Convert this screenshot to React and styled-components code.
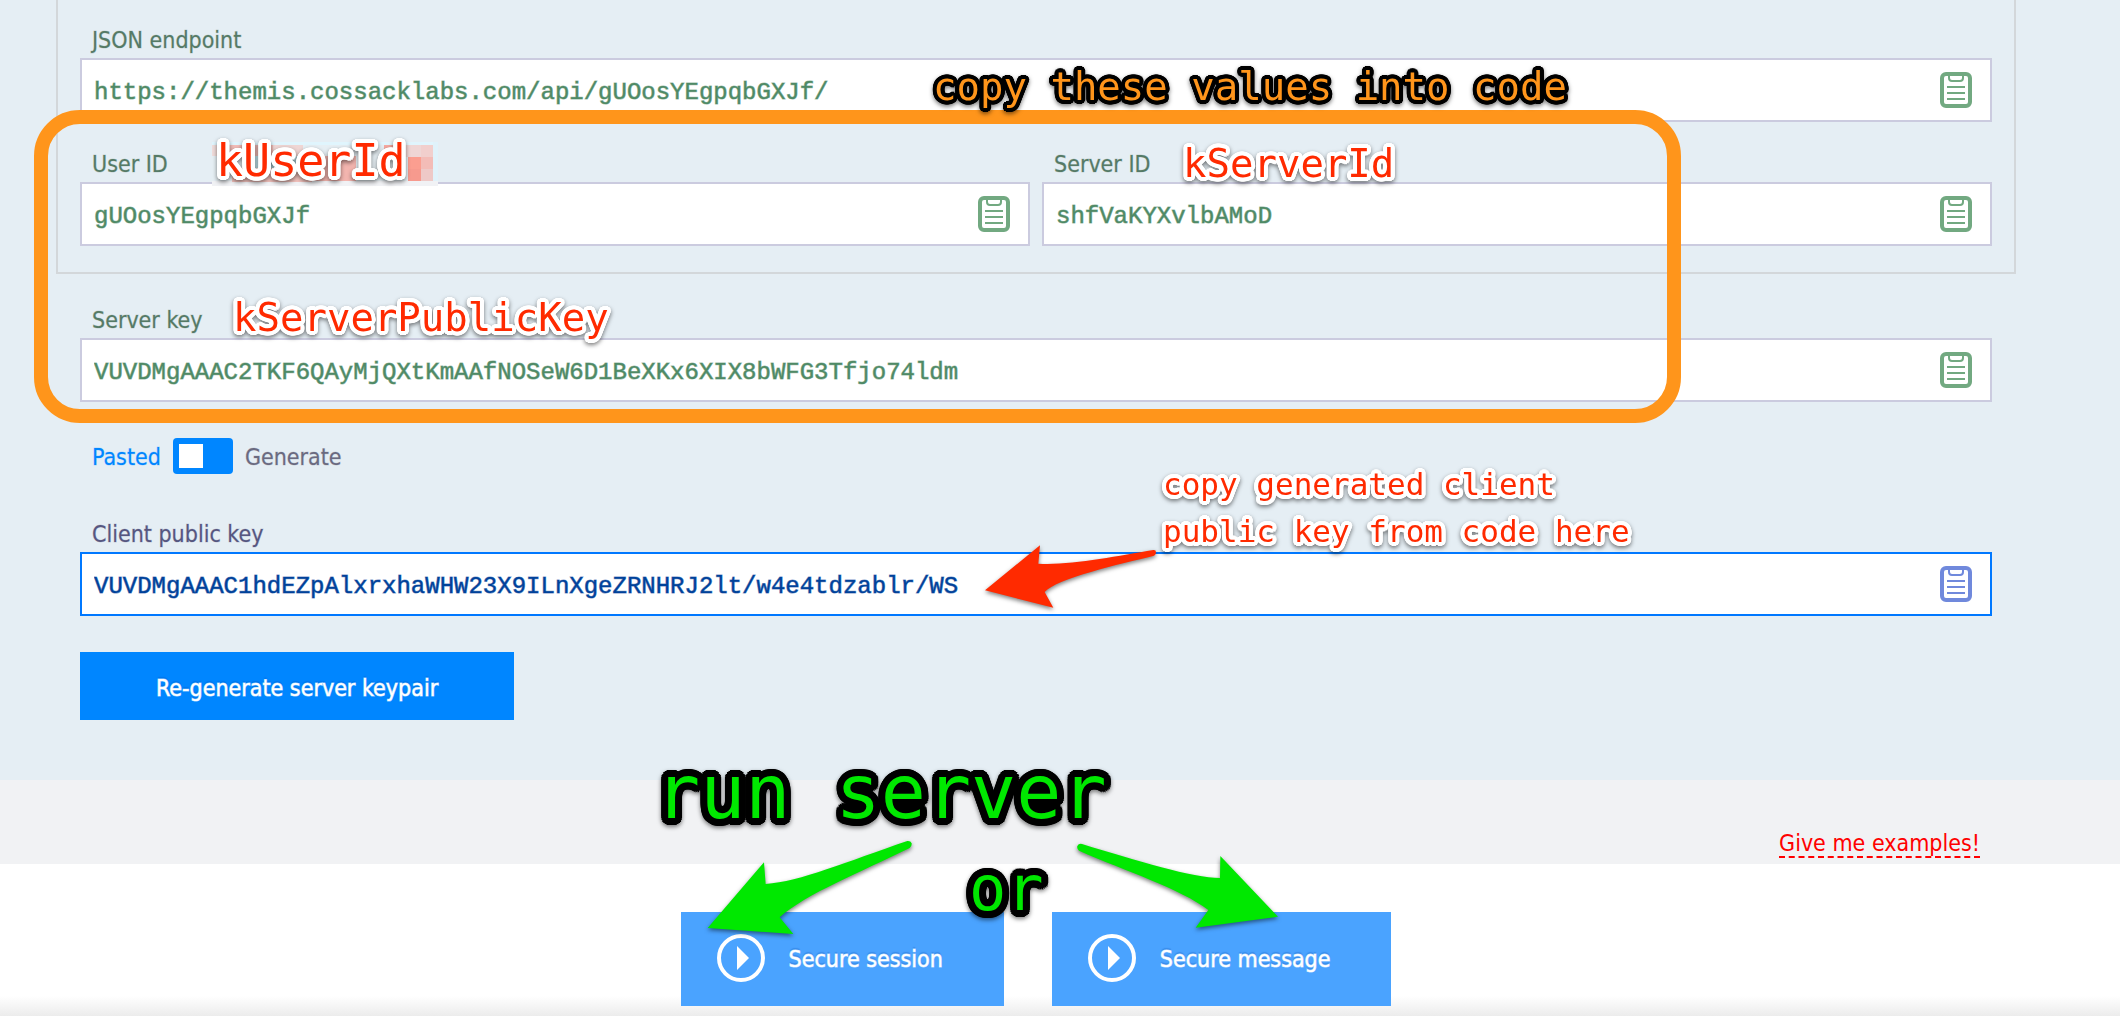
import React, { useId } from "react";
import styled, { createGlobalStyle, css } from "styled-components";

const uiFont = `"DejaVu Sans Condensed", Tahoma, "DejaVu Sans", sans-serif`;
const codeFont = `"Liberation Mono", "Courier New", monospace`;
const noteFont = `"DejaVu Sans Mono", Menlo, monospace`;

const GlobalStyle = createGlobalStyle`
  *, *::before, *::after { box-sizing: border-box; }
  body { margin: 0; background: #fff; font-family: ${uiFont}; font-size: 23px; }
  button, input { font: inherit; margin: 0; }
`;

const tones = {
  green: { label: "#557a66", text: "#4f8a66", border: "#cbcbdf", icon: "#72a981" },
  blue: { label: "#565680", text: "#00429a", border: "#0078ff", icon: "#7089dc" },
};

/* Round outline built from hard shadows placed on circles around the glyphs. */
const outline = (radius, color) => {
  const ring = [];
  for (let step = radius; step > 0; step -= 2) {
    for (let i = 0; i < 24; i += 1) {
      const a = (i / 24) * Math.PI * 2;
      ring.push(`${(Math.cos(a) * step).toFixed(2)}px ${(Math.sin(a) * step).toFixed(2)}px 0 ${color}`);
    }
  }
  return ring.join(", ");
};

const Page = styled.div`
  position: relative;
  overflow: hidden;
`;

const KeysSection = styled.main`
  padding: 0 104px 60px 56px;
  background: #e5eef4;
`;

const EndpointGroup = styled.section`
  display: flex;
  flex-direction: column;
  gap: 24px;
  padding: 22px 22px 26px;
  border: 2px solid #d3d7da;
  border-top: 0;
`;

const FieldRow = styled.div`
  display: flex;
  gap: 12px;
`;

const KeyGroup = styled.section`
  padding: 28px 24px 0;
`;

const FieldBox = styled.div`
  flex: 1;
  min-width: 0;
`;

const FieldLabel = styled.label`
  display: block;
  height: 36px;
  padding-left: 12px;
  line-height: 36px;
  color: ${(p) => tones[p.$tone].label};
  -webkit-text-stroke: 1px ${(p) => tones[p.$tone].label}40;
`;

const InputShell = styled.div`
  display: flex;
  align-items: center;
  height: 64px;
  padding-right: 18px;
  border: 2px solid ${(p) => tones[p.$tone].border};
  background: #fff;
`;

const TextInput = styled.input`
  flex: 1;
  min-width: 0;
  height: 100%;
  padding: 5px 12px 0;
  border: 0;
  outline: 0;
  background: transparent;
  color: ${(p) => tones[p.$tone].text};
  font-family: ${codeFont};
  font-size: 24px;
  -webkit-text-stroke: 1px ${(p) => tones[p.$tone].text}90;
`;

const CopyButton = styled.button`
  display: flex;
  padding: 0;
  border: 0;
  background: none;
  color: ${(p) => tones[p.$tone].icon};
  cursor: pointer;
`;

const SourceSwitch = styled.label`
  display: flex;
  align-items: center;
  gap: 12px;
  height: 36px;
  margin: 36px 0 42px;
  padding-left: 12px;
`;

const SwitchText = styled.span`
  padding-top: 2px;
  color: ${(p) => (p.$active ? "#0086ff" : "#6a6a80")};
  -webkit-text-stroke: 1px ${(p) => (p.$active ? "#0086ff40" : "#6a6a8040")};
`;

const SwitchInput = styled.input`
  appearance: none;
  display: flex;
  align-items: center;
  width: 60px;
  height: 36px;
  padding: 6px;
  border-radius: 4px;
  background: #0086ff;
  &::before {
    content: "";
    width: 24px;
    height: 24px;
    background: #fff;
  }
  &:checked { justify-content: flex-end; }
`;

const buttonText = css`
  border: 0;
  color: #fff;
  -webkit-text-stroke: 1px #ffffffa0;
  text-shadow: 0 -2px 1px rgba(0, 70, 170, 0.25);
  cursor: pointer;
`;

const RegenerateButton = styled.button`
  ${buttonText}
  display: block;
  height: 68px;
  margin-top: 36px;
  padding: 4px 76px 0;
  background: #0086ff;
`;

const ExamplesBar = styled.aside`
  display: flex;
  justify-content: flex-end;
  align-items: flex-end;
  height: 84px;
  padding: 0 140px 6px 0;
  background: #f1f2f4;
`;

const ExamplesLink = styled.a`
  border-bottom: 2px dashed #f00;
  color: #f00;
  line-height: 26px;
  text-decoration: none;
`;

const RunBar = styled.footer`
  display: flex;
  justify-content: center;
  gap: 48px;
  padding: 48px 128px 10px 80px;
  background: linear-gradient(to top, #ececec, #fff 20px);
`;

const RunButton = styled.button`
  ${buttonText}
  display: flex;
  align-items: center;
  gap: 24px;
  height: 94px;
  padding: 0 61px 2px 36px;
  background: #4aa3ff;
`;

const RunText = styled.span`
  padding-top: 2px;
`;

/* Marks drawn over the form */
const Frame = styled.div`
  position: absolute;
  top: 110px;
  left: 34px;
  right: 439px;
  height: 313px;
  border: 14px solid #ff951b;
  border-radius: 46px;
  pointer-events: none;
`;

const noteKinds = {
  red: css`color: #ff2a00; text-shadow: ${outline(4, "#fff")};`,
  orange: css`color: #ff951b; text-shadow: ${outline(4, "#000")};`,
  green: css`color: #00e800; text-shadow: ${outline(7, "#000")};`,
};

const Note = styled.p`
  position: absolute;
  top: ${(p) => p.$y}px;
  left: ${(p) => p.$x}px;
  margin: 0;
  font-family: ${noteFont};
  font-size: ${(p) => p.$size}px;
  line-height: 47px;
  white-space: pre;
  filter: drop-shadow(0 2px 2px rgba(0, 0, 0, 0.5));
  pointer-events: none;
  ${(p) => noteKinds[p.$kind]}
`;

const ArrowSvg = styled.svg`
  position: absolute;
  top: ${(p) => p.$y}px;
  left: ${(p) => p.$x}px;
  overflow: visible;
  filter: drop-shadow(0 2px 2px rgba(0, 0, 0, 0.5));
  pointer-events: none;
`;

const MosaicSvg = styled.svg`
  position: absolute;
  top: 142px;
  left: 212px;
  pointer-events: none;
`;

function ClipboardIcon() {
  return (
    <svg width="32" height="36" viewBox="0 0 32 36" fill="none" stroke="currentColor" strokeWidth="2" aria-hidden="true">
      <rect x="2" y="2" width="28" height="32" rx="4" strokeWidth="4" />
      <path d="M9 3v3q0 3 3 3h8q3 0 3-3v-3M7 15h18M7 21h18M7 27h18" />
    </svg>
  );
}

function PlayIcon() {
  return (
    <svg width="48" height="48" viewBox="0 0 48 48" aria-hidden="true">
      <circle cx="24" cy="24" r="22" fill="none" stroke="#fff" strokeWidth="4" />
      <path d="M20 12l12 12-12 12z" fill="#fff" />
    </svg>
  );
}

function Field({ label, value, tone = "green" }) {
  const id = useId();
  return (
    <FieldBox>
      <FieldLabel htmlFor={id} $tone={tone}>{label}</FieldLabel>
      <InputShell $tone={tone}>
        <TextInput id={id} defaultValue={value} spellCheck={false} $tone={tone} />
        <CopyButton type="button" aria-label={`Copy ${label}`} $tone={tone}>
          <ClipboardIcon />
        </CopyButton>
      </InputShell>
    </FieldBox>
  );
}

function Arrow({ x, y, width, height, color, d }) {
  return (
    <ArrowSvg $x={x} $y={y} width={width} height={height} viewBox={`0 0 ${width * 3} ${height * 3}`} aria-hidden="true">
      <path d={d} fill={color} />
    </ArrowSvg>
  );
}

const mosaic = [
  [0, 3, 13, 11, "#f0dcda"],
  [13, 3, 48, 11, "#f3bdb8"],
  [61, 3, 30, 11, "#efd6d4"],
  [40, 14, 60, 12, "#c4e9f2"],
  [100, 14, 44, 25, "#f3b5af"],
  [20, 26, 80, 14, "#f2c2bd"],
  [172, 3, 12, 12, "#f6a9a0"],
  [184, 3, 25, 12, "#efd6d5"],
  [209, 3, 12, 12, "#f1cfcd"],
  [196, 15, 13, 12, "#fb9e90"],
  [196, 27, 13, 12, "#f79a8e"],
  [209, 15, 12, 12, "#f3bcb7"],
  [209, 27, 12, 12, "#eec9c7"],
];

function Mosaic() {
  return (
    <MosaicSvg width="226" height="44" aria-hidden="true">
      <rect width="226" height="44" fill="#e6eff4" />
      <rect width="226" height="3" fill="#e0f5fd" />
      <rect x="221" width="5" height="39" fill="#e0f2fa" />
      <rect y="39" width="226" height="5" fill="#f1f2f5" />
      {mosaic.map(([x, y, w, h, fill]) => (
        <rect key={`${x}-${y}`} x={x} y={y} width={w} height={h} fill={fill} />
      ))}
    </MosaicSvg>
  );
}

export default function App() {
  return (
    <Page>
      <GlobalStyle />
      <KeysSection>
        <EndpointGroup>
          <Field label="JSON endpoint" value="https://themis.cossacklabs.com/api/gUOosYEgpqbGXJf/" />
          <FieldRow>
            <Field label="User ID" value="gUOosYEgpqbGXJf" />
            <Field label="Server ID" value="shfVaKYXvlbAMoD" />
          </FieldRow>
        </EndpointGroup>
        <KeyGroup>
          <Field label="Server key" value="VUVDMgAAAC2TKF6QAyMjQXtKmAAfNOSeW6D1BeXKx6XIX8bWFG3Tfjo74ldm" />
          <SourceSwitch>
            <SwitchText $active>Pasted</SwitchText>
            <SwitchInput type="checkbox" role="switch" />
            <SwitchText>Generate</SwitchText>
          </SourceSwitch>
          <Field tone="blue" label="Client public key" value="VUVDMgAAAC1hdEZpAlxrxhaWHW23X9ILnXgeZRNHRJ2lt/w4e4tdzablr/WS" />
          <RegenerateButton type="button">Re-generate server keypair</RegenerateButton>
        </KeyGroup>
      </KeysSection>
      <ExamplesBar>
        <ExamplesLink href="#examples">Give me examples!</ExamplesLink>
      </ExamplesBar>
      <RunBar>
        <RunButton type="button"><PlayIcon /><RunText>Secure session</RunText></RunButton>
        <RunButton type="button"><PlayIcon /><RunText>Secure message</RunText></RunButton>
      </RunBar>

      <Frame />
      <Mosaic />
      <Note $kind="orange" $size={39} $x={933} $y={63}>copy these values into code</Note>
      <Note $kind="red" $size={45} $x={216} $y={137}>kUserId</Note>
      <Note $kind="red" $size={39} $x={1183} $y={140}>kServerId</Note>
      <Note $kind="red" $size={39} $x={233} $y={294}>kServerPublicKey</Note>
      <Note $kind="red" $size={31} $x={1163} $y={461}>{"copy generated client\npublic key from code here"}</Note>
      <Note $kind="green" $size={75} $x={655} $y={769}>run server</Note>
      <Note $kind="green" $size={62} $x={969} $y={865}>or</Note>
      <Arrow x={960} y={530} width={220} height={90} color="#ff2a00"
        d="M75 181L240 46L235 101C330 107 470 78 580 60Q588 59 588 67Q588 74 582 77C480 102 290 145 254 186L280 233Z" />
      <Arrow x={660} y={830} width={300} height={186} color="#00e800"
        d="M143 294L312 97L317 162C420 155 560 95 742 33Q752 32 755 40Q756 48 749 54C600 128 440 190 359 262L400 312Z" />
      <Arrow x={1060} y={830} width={300} height={186} color="#00e800"
        d="M654 260L481 78L480 144C400 144 230 92 66 42Q56 40 52 48Q50 56 57 62C200 125 360 175 445 240L407 293Z" />
    </Page>
  );
}
